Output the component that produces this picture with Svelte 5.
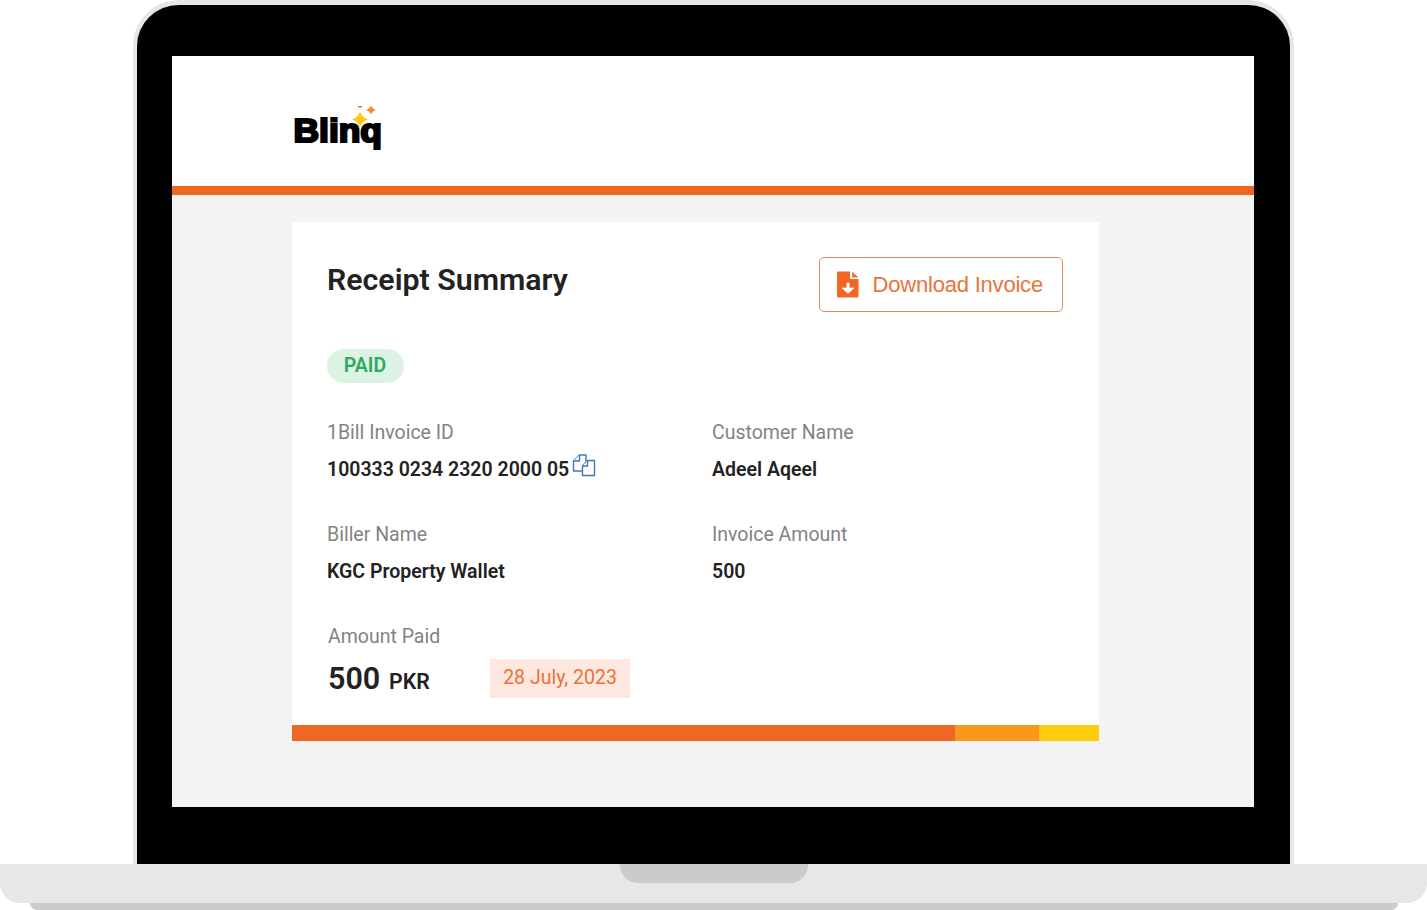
<script>
  const fields = [
    { label: '1Bill Invoice ID', value: '100333 0234 2320 2000 05', copy: true },
    { label: 'Customer Name', value: 'Adeel Aqeel' },
    { label: 'Biller Name', value: 'KGC Property Wallet' },
    { label: 'Invoice Amount', value: '500' }
  ];
</script>

<div class="laptop">
  <div class="lid">
    <div class="screen">
      <header>
        <svg class="logo" width="96" height="50" viewBox="0 0 96 50" role="img" aria-label="Blinq">
          <text x="0.500" y="36.500" textLength="88.500" lengthAdjust="spacingAndGlyphs">Blinq</text>
          <path d="M67 6.500Q68.800 12.200 75 14.500Q68.800 16.800 67 22Q65.200 16.800 59 14.500Q65.200 12.200 67 6.500Z" fill="#fdc913" />
          <path d="M78 0.500Q79.200 3.800 83.200 5Q79.200 6.200 78 9.500Q76.800 6.200 72.800 5Q76.800 3.800 78 0.500Z" fill="#f08a34" />
          <path d="M64 1h6l-3 2Z" fill="#e8743b" />
        </svg>
      </header>
      <main>
        <section class="card">
          <div class="top">
            <h1>Receipt Summary</h1>
            <button>
              <svg width="22" height="27" viewBox="0 0 22 27" aria-hidden="true">
                <path d="M0 1.500Q0 0.500 1 0.500H13V8H21.500V25.500Q21.500 26.500 20.500 26.500H1Q0 26.500 0 25.500Z" fill="#f26522" />
                <path d="M15.200 0.500L21.500 6.500H15.200Z" fill="#e8743b" />
                <path d="M9.800 12h2.400v5h4.800L11 22.500L5 17h4.800Z" fill="#fff" stroke="#fff" stroke-width="0.600" />
              </svg>
              <span>Download Invoice</span>
            </button>
          </div>
          <span class="status">PAID</span>
          <div class="fields">
            {#each fields as field}
              <div>
                <div class="label">{field.label}</div>
                <div class="value">
                  <span>{field.value}</span>
                  {#if field.copy}
                    <svg width="24" height="23" viewBox="0 0 24 23" fill="#fff" stroke="#4277b5" stroke-width="1.400" stroke-linejoin="round" aria-hidden="true">
                      <path d="M7.500 1H14V17H1.500V7Z" />
                      <path d="M7.500 1V7H1.500" />
                      <path d="M15.500 6.500H22.500V21.500H10.500V12Z" />
                      <path d="M15.500 6.500V12H10.500" />
                    </svg>
                  {/if}
                </div>
              </div>
            {/each}
          </div>
          <div class="label paid">Amount Paid</div>
          <div class="amount">
            <strong>500</strong><b>PKR</b>
            <time>28 July, 2023</time>
          </div>
          <div class="stripe"><i></i><i></i><i></i></div>
        </section>
      </main>
    </div>
  </div>
  <div class="base"><div class="notch"></div></div>
  <div class="foot"></div>
</div>

<style>
  :global(body) { background: #fff; overflow: hidden; }
  .laptop {
    width: 1427px; height: 910px; overflow: hidden;
    display: flex; flex-direction: column; align-items: center;
    font-family: Roboto, sans-serif; color: #222;
  }
  .lid {
    box-sizing: border-box; width: 1161px; height: 864px;
    border: 4px solid #e7e7e7; border-top-width: 5px; border-bottom: 0;
    border-radius: 46px 46px 0 0; background: #000;
    padding: 51px 36px 57px 35px;
  }
  .screen { height: 751px; background: #f3f3f3; display: flex; flex-direction: column; }
  header {
    box-sizing: border-box; height: 139px; flex: none; background: #fff;
    border-bottom: 9px solid #f06623; padding: 49px 0 0 121px;
  }
  .logo { display: block; }
  .logo text {
    font: bold 32.500px "Liberation Sans", sans-serif; fill: #000;
    stroke: #000; stroke-width: 2.200px;
  }
  main { padding: 27px 155px 0 120px; }
  .card {
    box-sizing: border-box; width: 807px; height: 519px; background: #fff;
    padding: 35px 0 0 35px; display: flex; flex-direction: column;
  }
  .top { display: flex; justify-content: space-between; height: 92px; padding-right: 36px; }
  h1 { margin: 4px 0 0; font-size: 30.300px; line-height: 37px; font-weight: 600; white-space: nowrap; }
  button {
    box-sizing: border-box; width: 244px; height: 55px; padding: 0 0 0 17px;
    display: flex; align-items: center; gap: 13.500px; white-space: nowrap;
    background: #fff; border: 1.500px solid #e58a61; border-radius: 5px;
    color: #e8743b; font: 22px "Liberation Sans", sans-serif; letter-spacing: -0.200px;
  }
  .status {
    width: 77px; height: 34px; border-radius: 17px; background: #dcf3e4;
    color: #30a763; font-size: 19.500px; font-weight: 600; line-height: 34px; text-align: center;
    text-indent: -1px;
  }
  .fields { display: grid; grid-template-columns: 385px 1fr; grid-auto-rows: 102px; padding-top: 37px; }
  .label { color: #838383; font-size: 19.500px; line-height: 26px; }
  .value {
    display: flex; align-items: center; gap: 3px; height: 26px; margin-top: 10px;
    font-size: 19.500px; font-weight: 600; white-space: nowrap;
  }
  .value svg { margin-top: -7px; }
  .paid { padding-left: 1px; }
  .amount { display: flex; height: 39px; margin-top: 9px; padding-left: 1px; align-items: baseline; line-height: 39px; }
  strong { font-size: 30.500px; font-weight: 600; width: 61px; }
  b { font-size: 21.300px; font-weight: 600; width: 101px; }
  time {
    width: 140px; height: 39px; align-self: flex-start; background: #fde7df;
    color: #e8743b; font-size: 19.500px; line-height: 37px; text-align: center;
  }
  .stripe { display: grid; grid-template-columns: 663px 84px 60px; height: 16px; width: 807px; margin: auto 0 0 -35px; }
  .stripe i:nth-child(1) { background: #f06623; }
  .stripe i:nth-child(2) { background: #f9981d; }
  .stripe i:nth-child(3) { background: #fdcc0d; }
  .base { width: 1427px; height: 39px; background: #e7e7e7; border-radius: 0 0 20px 20px; }
  .notch { width: 188px; height: 19px; margin: 0 auto; background: #cbcbcb; border-radius: 0 0 18px 18px; }
  .foot { width: 1368px; height: 7px; background: #cbcbcb; border-radius: 0 0 7px 7px; }
</style>
